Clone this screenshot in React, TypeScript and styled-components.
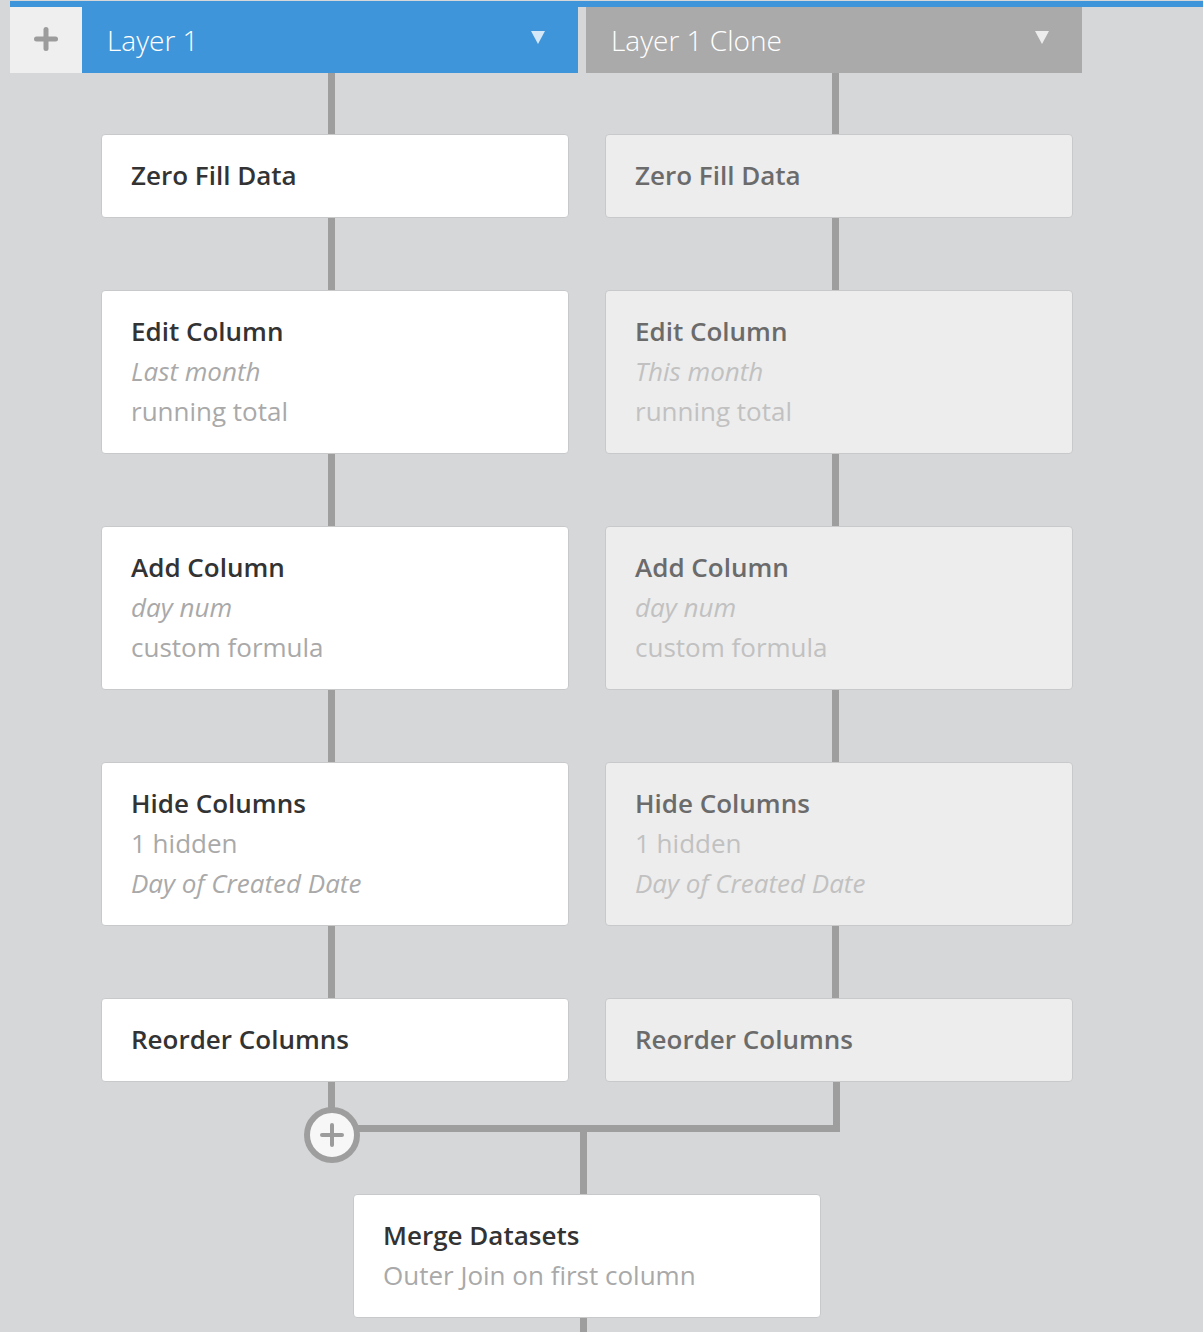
import React from 'react';
import styled, { createGlobalStyle } from 'styled-components';

type StepLine = { text: string; italic?: boolean };
type Step = { title: string; lines: StepLine[] };
type Layer = { name: string; active: boolean; steps: Step[] };

const layers: Layer[] = [
  {
    name: 'Layer 1',
    active: true,
    steps: [
      { title: 'Zero Fill Data', lines: [] },
      {
        title: 'Edit Column',
        lines: [{ text: 'Last month', italic: true }, { text: 'running total' }],
      },
      {
        title: 'Add Column',
        lines: [{ text: 'day num', italic: true }, { text: 'custom formula' }],
      },
      {
        title: 'Hide Columns',
        lines: [{ text: '1 hidden' }, { text: 'Day of Created Date', italic: true }],
      },
      { title: 'Reorder Columns', lines: [] },
    ],
  },
  {
    name: 'Layer 1 Clone',
    active: false,
    steps: [
      { title: 'Zero Fill Data', lines: [] },
      {
        title: 'Edit Column',
        lines: [{ text: 'This month', italic: true }, { text: 'running total' }],
      },
      {
        title: 'Add Column',
        lines: [{ text: 'day num', italic: true }, { text: 'custom formula' }],
      },
      {
        title: 'Hide Columns',
        lines: [{ text: '1 hidden' }, { text: 'Day of Created Date', italic: true }],
      },
      { title: 'Reorder Columns', lines: [] },
    ],
  },
];

const mergeStep: Step = {
  title: 'Merge Datasets',
  lines: [{ text: 'Outer Join on first column' }],
};

export default function App() {
  return (
    <>
      <GlobalStyle />
      <Page>
        <Header>
          <AddLayerButton>
            <PlusIcon size={24} stroke={5} />
          </AddLayerButton>
          {layers.map((layer) => (
            <LayerTab key={layer.name} $active={layer.active}>
              <span>{layer.name}</span>
              <Caret />
            </LayerTab>
          ))}
        </Header>

        <Columns>
          {layers.map((layer) => (
            <Column key={layer.name}>
              {layer.steps.map((step, i) => (
                <React.Fragment key={step.title}>
                  <Connector $height={i === 0 ? 61 : 72} />
                  <StepCard step={step} muted={!layer.active} />
                </React.Fragment>
              ))}
            </Column>
          ))}
        </Columns>

        <MergeSection>
          <Bracket>
            <JoinButton>
              <PlusIcon size={24} stroke={4} />
            </JoinButton>
          </Bracket>
          <MergeStem $height={62} />
          <MergeCardSlot>
            <StepCard step={mergeStep} muted={false} />
          </MergeCardSlot>
          <MergeStem $height={20} />
        </MergeSection>
      </Page>
    </>
  );
}

function StepCard({ step, muted }: { step: Step; muted: boolean }) {
  return (
    <Card $muted={muted}>
      <CardTitle $muted={muted}>{step.title}</CardTitle>
      {step.lines.map((line) => (
        <CardLine key={line.text} $muted={muted} $italic={!!line.italic}>
          {line.text}
        </CardLine>
      ))}
    </Card>
  );
}

function PlusIcon({ size, stroke }: { size: number; stroke: number }) {
  const half = size / 2;
  const inset = stroke / 2;
  return (
    <svg width={size} height={size} viewBox={`0 0 ${size} ${size}`}>
      <g stroke="#9c9c9c" strokeWidth={stroke} strokeLinecap="round">
        <line x1={inset} y1={half} x2={size - inset} y2={half} />
        <line x1={half} y1={inset} x2={half} y2={size - inset} />
      </g>
    </svg>
  );
}

const GlobalStyle = createGlobalStyle`
  html, body {
    margin: 0;
    background: #d6d7d9;
    font-family: "Open Sans", "Noto Sans", sans-serif;
  }
`;

const Page = styled.div`
  padding: 1px 0 0 10px;
  min-height: 1331px;
  overflow: hidden;
`;

const Header = styled.div`
  display: flex;
  gap: 8px;
  border-top: 6px solid #3f95d9;
`;

const AddLayerButton = styled.div`
  width: 72px;
  height: 66px;
  margin-right: -8px;
  background: #efefef;
  display: flex;
  align-items: center;
  justify-content: center;
  padding-bottom: 2px;
  box-sizing: border-box;
`;

const LayerTab = styled.div<{ $active: boolean }>`
  width: 496px;
  height: 66px;
  box-sizing: border-box;
  padding: 0 33px 0 25px;
  display: flex;
  align-items: center;
  justify-content: space-between;
  background: ${({ $active }) => ($active ? '#3f95d9' : '#aaaaaa')};
  color: #ffffff;
  font-size: 28px;
  font-weight: 300;
`;

const Caret = styled.span`
  width: 0;
  height: 0;
  border-left: 7.5px solid transparent;
  border-right: 7.5px solid transparent;
  border-top: 13px solid rgba(255, 255, 255, 0.78);
  margin-top: -6px;
`;

const Columns = styled.div`
  display: flex;
  gap: 8px;
  padding-left: 72px;
`;

const Column = styled.div`
  width: 496px;
  display: flex;
  flex-direction: column;
`;

const Connector = styled.div<{ $height: number }>`
  width: 7px;
  height: ${({ $height }) => $height}px;
  margin-left: 246px;
  background: #9e9e9e;
`;

const Card = styled.div<{ $muted: boolean }>`
  width: 468px;
  margin-left: 19px;
  box-sizing: border-box;
  padding: 20px 29px 22px;
  border: 1px solid #c8c9cb;
  border-radius: 4px;
  background: ${({ $muted }) => ($muted ? '#ededed' : '#ffffff')};
`;

const CardTitle = styled.div<{ $muted: boolean }>`
  font-size: 26px;
  font-weight: 600;
  line-height: 40px;
  color: ${({ $muted }) => ($muted ? '#6b6b6b' : '#333333')};
`;

const CardLine = styled.div<{ $muted: boolean; $italic: boolean }>`
  font-size: 26px;
  line-height: 40px;
  font-style: ${({ $italic }) => ($italic ? 'italic' : 'normal')};
  color: ${({ $muted }) => ($muted ? '#c1c1c1' : '#a9a9a9')};
`;

const MergeSection = styled.div`
  display: flex;
  flex-direction: column;
  align-items: flex-start;
  margin-left: 318px;
`;

const Bracket = styled.div`
  position: relative;
  width: 512px;
  height: 50px;
  box-sizing: border-box;
  border: 7px solid #9e9e9e;
  border-top: none;
`;

const JoinButton = styled.div`
  position: absolute;
  left: -31px;
  top: 25px;
  width: 56px;
  height: 56px;
  box-sizing: border-box;
  border: 6px solid #9e9e9e;
  border-radius: 50%;
  background: #f7f7f7;
  display: flex;
  align-items: center;
  justify-content: center;
`;

const MergeStem = styled.div<{ $height: number }>`
  width: 7px;
  height: ${({ $height }) => $height}px;
  margin-left: 252px;
  background: #9e9e9e;
`;

const MergeCardSlot = styled.div`
  margin-left: 16px;
  margin-left: 6px;
`;
